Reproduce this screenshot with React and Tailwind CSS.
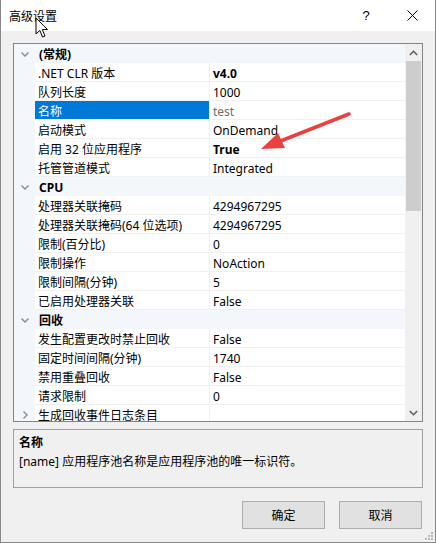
const rows = [
  { type: 'cat', name: '(常规)' },
  { name: '.NET CLR 版本', value: 'v4.0', bold: true },
  { name: '队列长度', value: '1000' },
  { name: '名称', value: 'test', selected: true },
  { name: '启动模式', value: 'OnDemand' },
  { name: '启用 32 位应用程序', value: 'True', bold: true },
  { name: '托管管道模式', value: 'Integrated' },
  { type: 'cat', name: 'CPU' },
  { name: '处理器关联掩码', value: '4294967295' },
  { name: '处理器关联掩码(64 位选项)', value: '4294967295' },
  { name: '限制(百分比)', value: '0' },
  { name: '限制操作', value: 'NoAction' },
  { name: '限制间隔(分钟)', value: '5' },
  { name: '已启用处理器关联', value: 'False' },
  { type: 'cat', name: '回收' },
  { name: '发生配置更改时禁止回收', value: 'False' },
  { name: '固定时间间隔(分钟)', value: '1740' },
  { name: '禁用重叠回收', value: 'False' },
  { name: '请求限制', value: '0' },
  { name: '生成回收事件日志条目', value: '', collapsed: true },
]

function Chevron({ right }) {
  return (
    <svg width="10" height="10" viewBox="0 0 10 10" className="text-[#8a8a8a]">
      {right ? (
        <path d="M3.5 1.5 L7 5 L3.5 8.5" fill="none" stroke="currentColor" strokeWidth="1.4" />
      ) : (
        <path d="M1.5 3.5 L5 7 L8.5 3.5" fill="none" stroke="currentColor" strokeWidth="1.4" />
      )}
    </svg>
  )
}

function Row({ row }) {
  if (row.type === 'cat') {
    return (
      <div className="flex h-[19px] shrink-0 items-center bg-[#f3f6fb]">
        <div className="flex w-[21px] shrink-0 justify-center">
          <Chevron />
        </div>
        <span className="pl-[4px] pt-[3px] font-bold text-black">{row.name}</span>
      </div>
    )
  }
  return (
    <div className="flex h-[19px] shrink-0">
      <div className="flex w-[21px] shrink-0 items-center justify-center bg-[#f3f6fb]">
        {row.collapsed ? <Chevron right /> : null}
      </div>
      <div
        className={`flex w-[174px] shrink-0 items-center border-b border-[#f0f0f0] pl-[3px] pt-[3px] ${
          row.selected ? 'bg-[#0078d7] text-white' : 'text-black'
        }`}
      >
        {row.name}
      </div>
      <div className="w-px shrink-0 bg-[#f0f0f0]" />
      <div
        className={`flex w-[195px] shrink-0 items-center border-b border-[#f0f0f0] pl-[3px] pt-[3px] ${
          row.bold ? 'font-bold text-black' : row.selected ? 'text-[#6d6d6d]' : 'text-black'
        }`}
      >
        {row.value}
      </div>
    </div>
  )
}

export default function App() {
  return (
    <div
      className="relative flex h-[543px] w-[436px] flex-col overflow-hidden border-x border-b border-[#888888] bg-[#f0f0f0] text-[12px] leading-none"
      style={{ fontFamily: '"Noto Sans", "Noto Sans CJK SC", sans-serif' }}
    >
      {/* title bar */}
      <div className="flex h-[31px] shrink-0 items-center bg-white pl-[8px]">
        <span className="pt-[2px] text-[12px] text-black">高级设置</span>
        <div className="ml-auto flex items-center">
          <span className="w-[46px] text-center text-[13px] text-black" style={{ fontFamily: '"Liberation Sans", sans-serif' }}>?</span>
          <div className="flex w-[46px] justify-center">
            <svg width="11" height="11" viewBox="0 0 11 11">
              <path d="M0.5 0.5 L10.5 10.5 M10.5 0.5 L0.5 10.5" stroke="#000" strokeWidth="1" />
            </svg>
          </div>
        </div>
      </div>

      {/* property grid */}
      <div className="ml-[12px] mt-[12px] flex h-[379px] w-[410px] border border-[#848484] bg-white">
        <div className="flex w-[391px] flex-col overflow-hidden">
          {rows.map((row, i) => (
            <Row key={i} row={row} />
          ))}
        </div>
        <div className="flex w-[17px] flex-col bg-[#f0f0f0]">
          <div className="flex h-[17px] items-center justify-center">
            <svg width="9" height="6" viewBox="0 0 9 6">
              <path d="M0.8 5 L4.5 1.3 L8.2 5" fill="none" stroke="#606060" strokeWidth="1.6" />
            </svg>
          </div>
          <div className="mx-px h-[150px] bg-[#cdcdcd]" />
          <div className="flex-1" />
          <div className="flex h-[17px] items-center justify-center">
            <svg width="9" height="6" viewBox="0 0 9 6">
              <path d="M0.8 1 L4.5 4.7 L8.2 1" fill="none" stroke="#606060" strokeWidth="1.6" />
            </svg>
          </div>
        </div>
      </div>

      {/* description */}
      <div className="ml-[12px] mt-[7px] flex h-[59px] w-[410px] flex-col gap-[7px] border border-[#a0a0a0] px-[5px] pt-[7px]">
        <span className="font-bold text-black">名称</span>
        <span className="text-black">[name] 应用程序池名称是应用程序池的唯一标识符。</span>
      </div>

      {/* buttons */}
      <div className="mt-[13px] flex justify-end gap-[14px] pr-[13px]">
        <button className="h-[28px] w-[83px] border border-[#adadad] bg-[#e1e1e1] pt-[2px] text-[12px] text-black">确定</button>
        <button className="h-[28px] w-[83px] border border-[#adadad] bg-[#e1e1e1] pt-[2px] text-[12px] text-black">取消</button>
      </div>

      {/* resize grip */}
      <svg className="absolute bottom-[2px] right-[2px]" width="10" height="10" viewBox="0 0 10 10">
        {[[8, 2], [8, 5], [8, 8], [5, 5], [5, 8], [2, 8]].map(([x, y], i) => (
          <rect key={i} x={x} y={y} width="2" height="2" fill="#b8b8b8" />
        ))}
      </svg>

      {/* red annotation arrow */}
      <svg className="pointer-events-none absolute left-0 top-0" width="436" height="543">
        <line x1="348" y1="114" x2="272" y2="144" stroke="#e8413f" strokeWidth="3.5" strokeLinecap="round" />
        <polygon points="260,149 277,133 284,148" fill="#e8413f" />
      </svg>

      {/* mouse cursor */}
      <svg className="pointer-events-none absolute left-[34px] top-[17px]" width="14" height="22" viewBox="0 0 14 22">
        <path d="M1 1 L1 17 L4.8 13.4 L7.6 20 L10 19 L7.3 12.6 L12.5 12.5 Z" fill="#fff" stroke="#000" strokeWidth="1" strokeLinejoin="round" />
      </svg>
    </div>
  )
}
